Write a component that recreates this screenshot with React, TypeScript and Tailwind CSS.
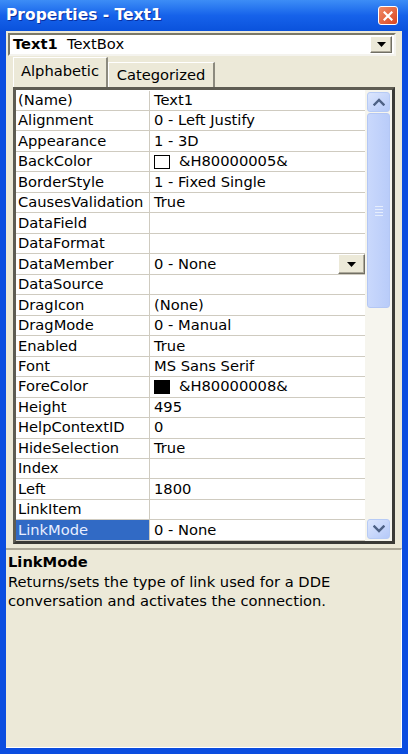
import React from "react";

type Row = {
  name: string;
  value?: string;
  swatch?: string;
  drop?: boolean;
  selected?: boolean;
};

const rows: Row[] = [
  { name: "(Name)", value: "Text1" },
  { name: "Alignment", value: "0 - Left Justify" },
  { name: "Appearance", value: "1 - 3D" },
  { name: "BackColor", value: "&H80000005&", swatch: "#ffffff" },
  { name: "BorderStyle", value: "1 - Fixed Single" },
  { name: "CausesValidation", value: "True" },
  { name: "DataField" },
  { name: "DataFormat" },
  { name: "DataMember", value: "0 - None", drop: true },
  { name: "DataSource" },
  { name: "DragIcon", value: "(None)" },
  { name: "DragMode", value: "0 - Manual" },
  { name: "Enabled", value: "True" },
  { name: "Font", value: "MS Sans Serif" },
  { name: "ForeColor", value: "&H80000008&", swatch: "#000000" },
  { name: "Height", value: "495" },
  { name: "HelpContextID", value: "0" },
  { name: "HideSelection", value: "True" },
  { name: "Index" },
  { name: "Left", value: "1800" },
  { name: "LinkItem" },
  { name: "LinkMode", value: "0 - None", selected: true },
];

// small beige 3D button with a black down triangle
function DropButton({ className }: { className: string }) {
  return (
    <div
      className={
        "flex items-center justify-center bg-[#ECE9D8] border border-t-white border-l-white border-r-[#716F64] border-b-[#716F64] shadow-[inset_-1px_-1px_0_#ACA899] " +
        className
      }
    >
      <svg width="9" height="5" viewBox="0 0 9 5">
        <polygon points="0,0 9,0 4.5,5" fill="#000" />
      </svg>
    </div>
  );
}

function Chevron({ up }: { up?: boolean }) {
  return (
    <svg width="12" height="8" viewBox="0 0 12 8">
      <polyline
        points={up ? "1.5,6.5 6,2 10.5,6.5" : "1.5,1.5 6,6 10.5,1.5"}
        fill="none"
        stroke="#4D6185"
        strokeWidth="2.4"
        strokeLinecap="square"
      />
    </svg>
  );
}

function ScrollButton({ up }: { up?: boolean }) {
  return (
    <div className="h-[20px] rounded-[3px] border border-[#B7CBF5] bg-linear-to-br from-[#DCE6FD] to-[#B5C9F8] flex items-center justify-center">
      <Chevron up={up} />
    </div>
  );
}

export default function App() {
  return (
    <div
      className="w-[408px] h-[754px] flex flex-col overflow-hidden text-black"
      style={{ fontFamily: '"DejaVu Sans", Verdana, sans-serif' }}
    >
      {/* title bar */}
      <div className="h-[31px] shrink-0 flex items-center justify-between pl-[6px] pr-[10px] bg-linear-to-b from-[#3D8DF6] via-[#1662EA] to-[#0A52DC]">
        <span className="text-white font-bold text-[15.5px] leading-none [text-shadow:1px_1px_0_#0A2F9E]">
          Properties - Text1
        </span>
        <div className="w-[20px] h-[19px] rounded-[3px] border border-white bg-linear-to-br from-[#F08A66] to-[#D8431C] flex items-center justify-center">
          <svg width="10" height="10" viewBox="0 0 10 10">
            <path d="M1.5 1.5 L8.5 8.5 M8.5 1.5 L1.5 8.5" stroke="#fff" strokeWidth="2.2" strokeLinecap="square" />
          </svg>
        </div>
      </div>

      {/* window body */}
      <div className="flex-1 flex flex-col bg-[#ECE9D8] border-x-[6px] border-b-[6px] border-[#0B4DE0]">
        {/* object combo */}
        <div className="mt-[2px] ml-[2px] mr-[6px] h-[23px] flex items-center bg-white border-2 border-t-[#7A7868] border-l-[#7A7868] border-r-[#F4F3EE] border-b-[#F4F3EE]">
          <span className="pl-[3px] text-[14.7px] leading-none">
            <b>Text1</b>&nbsp; TextBox
          </span>
          <DropButton className="ml-auto mr-[2px] w-[22px] h-[17px]" />
        </div>

        {/* tabs */}
        <div className="h-[31px] flex items-end pl-[7px]">
          <div className="h-[30px] w-[95px] flex items-center justify-center bg-[#ECE9D8] border-t border-l border-white border-r-2 border-r-[#8C8A7E] text-[14.7px] leading-none pb-[2px]">
            Alphabetic
          </div>
          <div className="h-[25px] w-[107px] flex items-center justify-center border-t border-l border-white border-r-2 border-r-[#8C8A7E] text-[14.7px] leading-none">
            Categorized
          </div>
        </div>

        {/* property grid */}
        <div className="mx-[7px] h-[457px] flex border-[3px] border-t-[#5E5C52] border-l-[#5E5C52] border-r-[#3A3A36] border-b-[#3A3A36] bg-white">
          <div className="flex-1 flex flex-col pt-[0.5px]">
            {rows.map((r) => (
              <div key={r.name} className="h-[20.5px] flex border-b border-[#CFCBC0] text-[14.7px] leading-none">
                <div
                  className={
                    "w-[134px] shrink-0 flex items-center pl-[2px] border-r border-[#CFCBC0] " +
                    (r.selected ? "bg-[#316AC5] text-[#E8EEFF]" : "")
                  }
                >
                  {r.name}
                </div>
                <div className="flex-1 flex items-center pl-[4px]">
                  {r.swatch && (
                    <span
                      className="w-[16px] h-[14px] border border-black mr-[9px] shrink-0"
                      style={{ background: r.swatch }}
                    />
                  )}
                  {r.value}
                  {r.drop && <DropButton className="ml-auto w-[27px] h-[20px]" />}
                </div>
              </div>
            ))}
          </div>

          {/* scrollbar */}
          <div className="w-[27px] shrink-0 flex flex-col px-[2px] py-[2px] bg-[#F6F5EE]">
            <ScrollButton up />
            <div className="mt-[1px] h-[195px] rounded-[3px] border border-[#B4C7F4] bg-linear-to-r from-[#C9D8FC] to-[#B9CCF9] flex flex-col items-center justify-center gap-[2px]">
              {[0, 1, 2, 3].map((i) => (
                <span key={i} className="w-[8px] h-[1px] bg-[#E6EEFD]" />
              ))}
            </div>
            <div className="flex-1" />
            <ScrollButton />
          </div>
        </div>

        {/* description */}
        <div className="mt-[4px] flex-1 border-t-2 border-t-[#ACA899] border-r border-b border-white px-[2px] pt-[2px] text-[14.7px] leading-[19.5px]">
          <div className="font-bold">LinkMode</div>
          <div>Returns/sets the type of link used for a DDE conversation and activates the connection.</div>
        </div>
      </div>
    </div>
  );
}
